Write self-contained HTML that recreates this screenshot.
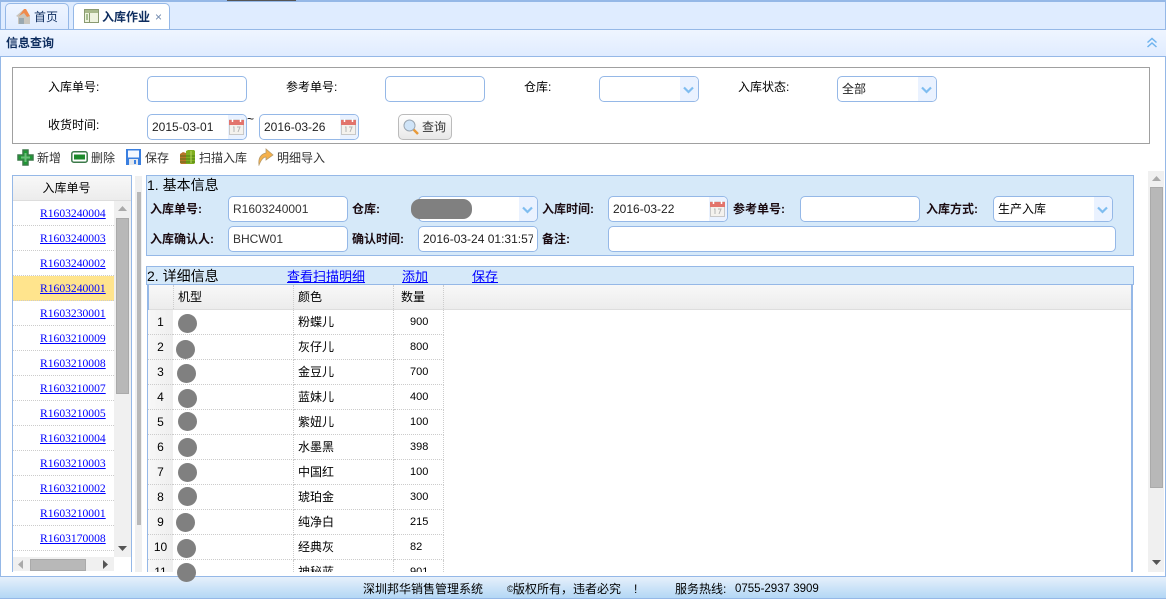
<!DOCTYPE html>
<html lang="zh-CN"><head><meta charset="utf-8"><title>入库作业</title>
<style>
html,body{margin:0;padding:0;width:1166px;height:599px;overflow:hidden;background:#fff}
body{position:relative;font:12px/14px "Liberation Sans","WenQuanYi Zen Hei","Noto Sans CJK SC",sans-serif;color:#000}
div,span,a,svg{position:absolute;box-sizing:border-box}
.t{white-space:nowrap}
.b{font-weight:bold;color:#1a0a10}
.i{background:#fff;border:1px solid #95b8e7;border-radius:5px;height:26px;overflow:hidden;padding:5px 0 0 4px;white-space:nowrap;color:#222}
.side{position:absolute;right:0;top:0;bottom:0;background:#eaf2ff}
.r{left:13px;width:101px;height:25px;border-bottom:1px dotted #ccc;padding-left:27px}
.r a{position:static;font:11.6px/26px "Liberation Serif",serif;color:#00f;text-decoration:underline}
.n{left:148px;width:25px;height:25px;background:linear-gradient(90deg,#f8f8f8,#eee);border-bottom:1px dotted #ccc;text-align:center;line-height:24px}
.c{height:25px;border-bottom:1px dotted #ccc;border-right:1px dotted #ccc;line-height:25px}
.o{background:#808080;border-radius:50%;width:19px;height:19px}
a.l{color:#00f;text-decoration:underline;font-size:13px;line-height:15px;white-space:nowrap}
</style></head><body>

<div style="left:0;top:0;width:1166px;height:29px;background:#dfecff;border-top:2px solid #95b8e7"></div>
<div style="left:227px;top:0;width:69px;height:1px;background:#555"></div>
<div style="left:0;top:0;width:1px;height:599px;background:#95b8e7"></div>
<div style="left:1165px;top:0;width:1px;height:599px;background:#95b8e7"></div>

<div style="left:5px;top:3px;width:64px;height:26px;background:linear-gradient(#eff5ff,#e0ecff);border:1px solid #95b8e7;border-bottom:0;border-radius:5px 5px 0 0"></div>
<svg style="left:15px;top:8px" width="16" height="17" viewBox="0 0 16 17"><path d="M1 8 8 2l2 1 5 5v8H3V9z" fill="#c9c5bd"/><path d="M4 8 9 1h2l4 7-3 1-3-4z" fill="#ef8a4c"/><rect x="4" y="10" width="5" height="6" fill="#9aa8b0"/></svg>
<span class="t" style="left:34px;top:10px;color:#0e2d5f">首页</span>
<div style="left:73px;top:3px;width:97px;height:27px;background:#fff;border:1px solid #95b8e7;border-bottom:0;border-radius:5px 5px 0 0"></div>
<svg style="left:84px;top:9px" width="15" height="15" viewBox="0 0 15 15"><rect x=".5" y=".5" width="14" height="13" fill="#eef3df" stroke="#8a9a70"/><rect x="1" y="1" width="13" height="3" fill="#a9b98c"/><path d="M5.5 4v9" stroke="#8a9a70"/><path d="M2 6h2M2 8h2M2 10h2" stroke="#5e8a40"/></svg>
<span class="t" style="left:102px;top:10px;color:#0e2d5f;font-weight:bold">入库作业</span>
<span class="t" style="left:155px;top:10px;color:#6f88ad;font-size:12px">×</span>

<div style="left:0;top:29px;width:1166px;height:28px;background:linear-gradient(#eff5ff,#e0ecff);border-top:1px solid #95b8e7;border-bottom:1px solid #95b8e7"></div>
<span class="t" style="left:6px;top:36px;color:#0e2d5f;font-weight:bold">信息查询</span>
<svg style="left:1146px;top:37px" width="12" height="12" viewBox="0 0 12 12" fill="none" stroke="#6fb3ee" stroke-width="1.5"><path d="M1.5 5.5 6 1.500l4.500 4M1.500 10 6 6l4.500 4"/></svg>

<div style="left:12px;top:67px;width:1138px;height:77px;border:1px solid #a0a0a0"></div>
<span class="t" style="left:48px;top:80px">入库单号:</span>
<span class="t" style="left:286px;top:80px">参考单号:</span>
<span class="t" style="left:524px;top:80px">仓库:</span>
<span class="t" style="left:738px;top:80px">入库状态:</span>
<span class="t" style="left:48px;top:118px">收货时间:</span>

<div class="i" style="left:147px;top:76px;width:100px"></div>
<div class="i" style="left:385px;top:76px;width:100px"></div>
<div class="i" style="left:599px;top:76px;width:100px"><div class="side" style="width:18px"></div><svg style="right:4px;top:9px" width="11" height="8" viewBox="0 0 11 8"><path d="M1 1.500 5.500 6 10 1.500" fill="none" stroke="#7fbdf0" stroke-width="2.200"/></svg></div>
<div class="i" style="left:837px;top:76px;width:100px">全部<div class="side" style="width:18px"></div><svg style="right:4px;top:9px" width="11" height="8" viewBox="0 0 11 8"><path d="M1 1.500 5.500 6 10 1.500" fill="none" stroke="#7fbdf0" stroke-width="2.200"/></svg></div>
<div class="i" style="left:147px;top:114px;width:100px">2015-03-01<div class="side" style="width:18px"></div><svg style="right:2px;top:4px" width="15" height="16" viewBox="0 0 15 16"><rect x=".5" y="1" width="14" height="14.500" fill="#f4f2ee" stroke="#c8c8c8"/><rect x="0" y="1" width="15" height="5" fill="#e2746c"/><path d="M3.500 0v3M11.500 0v3" stroke="#fff" stroke-width="1.500"/><path d="M4 8h1v5M8 8h3l-2 5" fill="none" stroke="#b5b5b5"/></svg></div>
<span class="t" style="left:247px;top:112px;font-size:12px">~</span>
<div class="i" style="left:259px;top:114px;width:100px">2016-03-26<div class="side" style="width:18px"></div><svg style="right:2px;top:4px" width="15" height="16" viewBox="0 0 15 16"><rect x=".5" y="1" width="14" height="14.500" fill="#f4f2ee" stroke="#c8c8c8"/><rect x="0" y="1" width="15" height="5" fill="#e2746c"/><path d="M3.500 0v3M11.500 0v3" stroke="#fff" stroke-width="1.500"/><path d="M4 8h1v5M8 8h3l-2 5" fill="none" stroke="#b5b5b5"/></svg></div>
<div style="left:398px;top:114px;width:54px;height:26px;border:1px solid #bbb;border-radius:5px;background:linear-gradient(#fff,#e8e8e8)"></div>
<svg style="left:403px;top:119px" width="16" height="16" viewBox="0 0 16 16"><path d="M10 10l5 5" stroke="#e89a3a" stroke-width="2.500"/><circle cx="6.500" cy="6.500" r="5.500" fill="#cfe4f8" stroke="#9aa6b2"/></svg>
<span class="t" style="left:422px;top:120px;color:#333">查询</span>

<svg style="left:17px;top:149px" width="17" height="17" viewBox="0 0 17 17"><path d="M6 1h5v5h5v5h-5v5H6v-5H1V6h5z" fill="#1d9a33" stroke="#3c7a4a" stroke-width="1.500"/><path d="M7.500 4h2v3.500H13v2H9.500V13h-2V9.500H4v-2h3.500z" fill="#fff" opacity=".35"/></svg>
<span class="t" style="left:37px;top:151px;color:#333">新增</span>
<svg style="left:71px;top:150px" width="17" height="14" viewBox="0 0 17 14"><rect x=".8" y="1.800" width="15.400" height="10.400" rx="2" fill="#fff" stroke="#3c7a4a" stroke-width="1.500"/><rect x="3" y="4.500" width="11" height="5" fill="#1d8a2c"/></svg>
<span class="t" style="left:91px;top:151px;color:#333">删除</span>
<svg style="left:126px;top:149px" width="15" height="16" viewBox="0 0 15 16"><rect width="15" height="16" fill="#3a7fe0"/><rect x="2" y="1.500" width="11" height="7" fill="#f4f8ff"/><rect x="3" y="10" width="9" height="6" fill="#e4e8ee"/><rect x="8" y="11" width="2" height="4" fill="#3a7fe0"/></svg>
<span class="t" style="left:145px;top:151px;color:#333">保存</span>
<svg style="left:180px;top:149px" width="15" height="16" viewBox="0 0 15 16"><path d="M0 5l3-2 3 1v11H1l-1-1z" fill="#b8752a"/><path d="M6 2l2-1h6l1 1v12l-1 1H6z" fill="#7fae1f"/><path d="M0 7h15M0 10h15M0 13h15" stroke="#3f6f12" stroke-width=".8"/><path d="M11 2v12" stroke="#b8d860"/></svg>
<span class="t" style="left:199px;top:151px;color:#333">扫描入库</span>
<svg style="left:257px;top:148px" width="17" height="18" viewBox="0 0 17 18"><path d="M2 17C1 10 4 6 9 5V1l7 6-7 5V9c-3 0-5 3-7 8z" fill="#f5b04a" stroke="#b89b6a" stroke-width=".8"/></svg>
<span class="t" style="left:277px;top:151px;color:#333">明细导入</span>

<!-- left list -->
<div style="left:12px;top:175px;width:120px;height:397px;border:1px solid #95b8e7;border-bottom:0"></div>
<div class="t" style="left:13px;top:176px;width:107px;height:25px;text-align:center;line-height:24px;z-index:2">入库单号</div>
<div style="left:13px;top:176px;width:118px;height:25px;background:linear-gradient(#f8f8f8,#ececec);border-bottom:1px solid #ddd"></div>
<div class="r" style="top:201px"><a href="#">R1603240004</a></div>
<div class="r" style="top:226px"><a href="#">R1603240003</a></div>
<div class="r" style="top:251px"><a href="#">R1603240002</a></div>
<div class="r" style="top:276px;background:#ffe48d"><a href="#">R1603240001</a></div>
<div class="r" style="top:301px"><a href="#">R1603230001</a></div>
<div class="r" style="top:326px"><a href="#">R1603210009</a></div>
<div class="r" style="top:351px"><a href="#">R1603210008</a></div>
<div class="r" style="top:376px"><a href="#">R1603210007</a></div>
<div class="r" style="top:401px"><a href="#">R1603210005</a></div>
<div class="r" style="top:426px"><a href="#">R1603210004</a></div>
<div class="r" style="top:451px"><a href="#">R1603210003</a></div>
<div class="r" style="top:476px"><a href="#">R1603210002</a></div>
<div class="r" style="top:501px"><a href="#">R1603210001</a></div>
<div class="r" style="top:526px"><a href="#">R1603170008</a></div>
<div style="left:114px;top:201px;width:17px;height:356px;background:#f0f0f0"></div>
<div style="left:116px;top:218px;width:13px;height:176px;background:#b8b8b8;border:1px solid #aaa"></div>
<svg style="left:118px;top:206px" width="9" height="5"><path d="M0 5 4.500 0 9 5z" fill="#aaa"/></svg>
<svg style="left:118px;top:546px" width="9" height="5"><path d="M0 0h9L4.500 5z" fill="#555"/></svg>
<div style="left:13px;top:557px;width:101px;height:14px;background:#f0f0f0"></div>
<div style="left:30px;top:559px;width:56px;height:12px;background:#b8b8b8;border:1px solid #aaa"></div>
<svg style="left:18px;top:560px" width="5" height="9"><path d="M5 0v9L0 4.500z" fill="#aaa"/></svg>
<svg style="left:103px;top:560px" width="5" height="9"><path d="M0 0v9l5-4.500z" fill="#555"/></svg>

<!-- splitter -->
<div style="left:135px;top:176px;width:7px;height:396px;background:#f0f0f0"></div>
<div style="left:137px;top:192px;width:4px;height:333px;background:#b8b8b8"></div>

<!-- basic -->
<div style="left:146px;top:175px;width:988px;height:81px;background:#d6e9f9;border:1px solid #95b8e7"></div>
<span class="t" style="left:147px;top:177px;font-size:14px;line-height:16px">1. 基本信息</span>
<span class="t b" style="left:150px;top:202px">入库单号:</span>
<span class="t b" style="left:352px;top:202px">仓库:</span>
<span class="t b" style="left:542px;top:202px">入库时间:</span>
<span class="t b" style="left:733px;top:202px">参考单号:</span>
<span class="t b" style="left:926px;top:202px">入库方式:</span>
<span class="t b" style="left:150px;top:232px">入库确认人:</span>
<span class="t b" style="left:352px;top:232px">确认时间:</span>
<span class="t b" style="left:542px;top:232px">备注:</span>
<div class="i" style="left:228px;top:196px;width:120px;color:#333">R1603240001</div>
<div class="i" style="left:228px;top:226px;width:120px;color:#333">BHCW01</div>
<div class="i" style="left:418px;top:196px;width:120px"><div class="side" style="width:18px"></div><svg style="right:4px;top:9px" width="11" height="8" viewBox="0 0 11 8"><path d="M1 1.500 5.500 6 10 1.500" fill="none" stroke="#7fbdf0" stroke-width="2.200"/></svg></div>
<div style="left:411px;top:199px;width:61px;height:20px;background:#808080;border-radius:9px"></div>
<div class="i" style="left:418px;top:226px;width:120px">2016-03-24 01:31:57<div style="right:0;top:0;width:4px;height:24px;background:#fff"></div></div>
<div class="i" style="left:608px;top:196px;width:120px">2016-03-22<div class="side" style="width:18px"></div><svg style="right:2px;top:4px" width="15" height="16" viewBox="0 0 15 16"><rect x=".5" y="1" width="14" height="14.500" fill="#f4f2ee" stroke="#c8c8c8"/><rect x="0" y="1" width="15" height="5" fill="#e2746c"/><path d="M3.500 0v3M11.500 0v3" stroke="#fff" stroke-width="1.500"/><path d="M4 8h1v5M8 8h3l-2 5" fill="none" stroke="#b5b5b5"/></svg></div>
<div class="i" style="left:608px;top:226px;width:508px"></div>
<div class="i" style="left:800px;top:196px;width:120px"></div>
<div class="i" style="left:993px;top:196px;width:120px;color:#000">生产入库<div class="side" style="width:18px"></div><svg style="right:4px;top:9px" width="11" height="8" viewBox="0 0 11 8"><path d="M1 1.500 5.500 6 10 1.500" fill="none" stroke="#7fbdf0" stroke-width="2.200"/></svg></div>

<!-- detail -->
<div style="left:146px;top:266px;width:988px;height:19px;background:#d6e9f9;border:1px solid #95b8e7;border-bottom:0"></div>
<span class="t" style="left:147px;top:268px;font-size:14px;line-height:16px">2. 详细信息</span>
<a class="l" href="#" style="left:287px;top:269px">查看扫描明细</a>
<a class="l" href="#" style="left:402px;top:269px">添加</a>
<a class="l" href="#" style="left:472px;top:269px">保存</a>
<div style="left:146px;top:284px;width:988px;height:1px;background:#95b8e7"></div>
<div style="left:147px;top:285px;width:2px;height:287px;background:#95b8e7"></div>
<div style="left:1131px;top:285px;width:2px;height:287px;background:#95b8e7"></div>
<div style="left:149px;top:285px;width:982px;height:25px;background:linear-gradient(#f8f8f8,#ececec);border-bottom:1px solid #ddd"></div>
<div style="left:173px;top:285px;width:1px;height:24px;border-left:1px dotted #ccc"></div>
<div style="left:293px;top:285px;width:1px;height:24px;border-left:1px dotted #ccc"></div>
<div style="left:393px;top:285px;width:1px;height:24px;border-left:1px dotted #ccc"></div>
<div style="left:443px;top:285px;width:1px;height:24px;border-left:1px dotted #ccc"></div>
<span class="t" style="left:178px;top:290px">机型</span>
<span class="t" style="left:298px;top:290px">颜色</span>
<span class="t" style="left:401px;top:290px">数量</span>

<div class="n" style="top:310px">1</div><div class="c" style="left:173px;top:310px;width:121px"></div><div class="c" style="left:294px;top:310px;width:100px;padding-left:4px">粉蝶儿</div><div class="c" style="left:394px;top:310px;width:50px;padding-left:16px;font-size:11px">900</div>
<div class="n" style="top:335px">2</div><div class="c" style="left:173px;top:335px;width:121px"></div><div class="c" style="left:294px;top:335px;width:100px;padding-left:4px">灰仔儿</div><div class="c" style="left:394px;top:335px;width:50px;padding-left:16px;font-size:11px">800</div>
<div class="n" style="top:360px">3</div><div class="c" style="left:173px;top:360px;width:121px"></div><div class="c" style="left:294px;top:360px;width:100px;padding-left:4px">金豆儿</div><div class="c" style="left:394px;top:360px;width:50px;padding-left:16px;font-size:11px">700</div>
<div class="n" style="top:385px">4</div><div class="c" style="left:173px;top:385px;width:121px"></div><div class="c" style="left:294px;top:385px;width:100px;padding-left:4px">蓝妹儿</div><div class="c" style="left:394px;top:385px;width:50px;padding-left:16px;font-size:11px">400</div>
<div class="n" style="top:410px">5</div><div class="c" style="left:173px;top:410px;width:121px"></div><div class="c" style="left:294px;top:410px;width:100px;padding-left:4px">紫妞儿</div><div class="c" style="left:394px;top:410px;width:50px;padding-left:16px;font-size:11px">100</div>
<div class="n" style="top:435px">6</div><div class="c" style="left:173px;top:435px;width:121px"></div><div class="c" style="left:294px;top:435px;width:100px;padding-left:4px">水墨黑</div><div class="c" style="left:394px;top:435px;width:50px;padding-left:16px;font-size:11px">398</div>
<div class="n" style="top:460px">7</div><div class="c" style="left:173px;top:460px;width:121px"></div><div class="c" style="left:294px;top:460px;width:100px;padding-left:4px">中国红</div><div class="c" style="left:394px;top:460px;width:50px;padding-left:16px;font-size:11px">100</div>
<div class="n" style="top:485px">8</div><div class="c" style="left:173px;top:485px;width:121px"></div><div class="c" style="left:294px;top:485px;width:100px;padding-left:4px">琥珀金</div><div class="c" style="left:394px;top:485px;width:50px;padding-left:16px;font-size:11px">300</div>
<div class="n" style="top:510px">9</div><div class="c" style="left:173px;top:510px;width:121px"></div><div class="c" style="left:294px;top:510px;width:100px;padding-left:4px">纯净白</div><div class="c" style="left:394px;top:510px;width:50px;padding-left:16px;font-size:11px">215</div>
<div class="n" style="top:535px">10</div><div class="c" style="left:173px;top:535px;width:121px"></div><div class="c" style="left:294px;top:535px;width:100px;padding-left:4px">经典灰</div><div class="c" style="left:394px;top:535px;width:50px;padding-left:16px;font-size:11px">82</div>
<div class="n" style="top:560px;height:12px;border:0;overflow:hidden">11</div><div class="c" style="left:173px;top:560px;width:121px;height:12px;border-bottom:0"></div><div class="c" style="left:294px;top:560px;width:100px;height:12px;border-bottom:0;padding-left:4px;overflow:hidden">神秘蓝</div><div class="c" style="left:394px;top:560px;width:50px;height:12px;border-bottom:0;padding-left:16px;font-size:11px;overflow:hidden">901</div>

<!-- right scrollbar -->
<div style="left:1148px;top:171px;width:16px;height:401px;background:#f0f0f0"></div>
<div style="left:1150px;top:187px;width:13px;height:301px;background:#b8b8b8;border:1px solid #aaa"></div>
<svg style="left:1152px;top:176px" width="9" height="5"><path d="M0 5 4.500 0 9 5z" fill="#aaa"/></svg>
<svg style="left:1152px;top:560px" width="9" height="5"><path d="M0 0h9L4.500 5z" fill="#555"/></svg>

<!-- footer -->
<div style="left:0;top:576px;width:1166px;height:23px;background:linear-gradient(#e6f0fb,#b3d7f5);border-top:1px solid #95b8e7;border-bottom:1px solid #95b8e7"></div>
<span class="t" style="left:363px;top:582px">深圳邦华销售管理系统</span>
<span class="t" style="left:507px;top:582px;font-size:9px">©</span>
<span class="t" style="left:513px;top:582px">版权所有，违者必究</span>
<span class="t" style="left:634px;top:582px">!</span>
<span class="t" style="left:675px;top:582px">服务热线:</span>
<span class="t" style="left:735px;top:582px;font-size:11.5px">0755-2937 3909</span>

<!-- masks -->
<div class="o" style="left:178px;top:314px"></div>
<div class="o" style="left:176px;top:340px"></div>
<div class="o" style="left:177px;top:364px"></div>
<div class="o" style="left:178px;top:389px"></div>
<div class="o" style="left:178px;top:412px"></div>
<div class="o" style="left:178px;top:438px"></div>
<div class="o" style="left:178px;top:463px"></div>
<div class="o" style="left:178px;top:487px"></div>
<div class="o" style="left:176px;top:513px"></div>
<div class="o" style="left:177px;top:539px"></div>
<div class="o" style="left:177px;top:563px"></div>
</body></html>
